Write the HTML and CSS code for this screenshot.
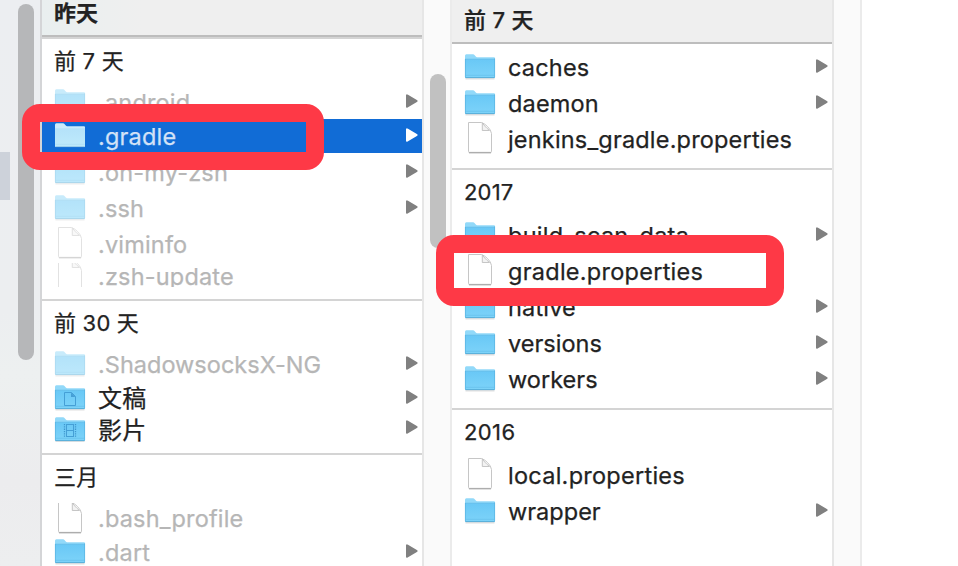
FILE: index.html
```html
<!DOCTYPE html>
<html lang="zh-CN">
<head>
<meta charset="utf-8">
<title>.gradle</title>
<link rel="stylesheet" href="styles.css">
</head>
<body>
<svg width="0" height="0" class="defs">
  <defs>
    <linearGradient id="front" x1="0" y1="0" x2="0" y2="1"><stop offset="0" stop-color="#69c8f6"/><stop offset="1" stop-color="#7dd3f9"/></linearGradient>
    <linearGradient id="front-light" x1="0" y1="0" x2="0" y2="1"><stop offset="0" stop-color="#b4e2f9"/><stop offset="1" stop-color="#bfeafb"/></linearGradient>
    <linearGradient id="fold" x1="0" y1="1" x2="1" y2="0"><stop offset="0" stop-color="#eee"/><stop offset="1" stop-color="#fff"/></linearGradient>
  </defs>
  <symbol id="folder" viewBox="0 0 32 26">
    <path d="M1.5 24.8h29" stroke="#000" stroke-opacity=".13" stroke-width="1.4"/>
    <path d="M1 1.8Q1 .2 2.4 .2H9q1 0 1.700 1L11.800 2.600q.5.6 1.300.6H30q1 0 1 1V23q0 1-1 1H2q-1 0-1-1z" fill="#92d9f9"/>
    <path d="M1 5.300H31V23q0 1-1 1H2q-1 0-1-1z" fill="url(#front)"/>
    <path d="M1 5.200H31" stroke="#5fb9e6" stroke-width=".7"/>
    <path d="M1.400 5V23M30.600 4.500V23" stroke="#57b2df" stroke-width=".7"/>
    <path d="M1.500 21.300H30.500" stroke="#62bce8" stroke-width=".6"/>
    <path d="M1.300 23.600H30.700" stroke="#55a9d4" stroke-width=".9"/>
  </symbol>
  <symbol id="folder-light" viewBox="0 0 32 26">
    <path d="M1 1.8Q1 .2 2.4 .2H9q1 0 1.700 1L11.800 2.600q.5.6 1.300.6H30q1 0 1 1V23q0 1-1 1H2q-1 0-1-1z" fill="#cbebfb"/>
    <path d="M1 5.300H31V23q0 1-1 1H2q-1 0-1-1z" fill="url(#front-light)"/>
    <path d="M1.500 21.300H30.500" stroke="#aadcf2" stroke-width=".6"/>
    <path d="M1.300 23.600H30.700" stroke="#92c6e6" stroke-width=".9"/>
  </symbol>
  <symbol id="file" viewBox="0 0 32 34">
    <path d="M5 32.500H27" stroke="#000" stroke-opacity=".12"/>
    <path d="M4.500 1.500H17.500Q20.500 2.500 23.500 5.500Q27 9 27.500 12.500V30.500q0 1-1 1h-21q-1 0-1-1z" fill="#fff" stroke="#c6c6c6"/>
    <path d="M18.300 1.800V9.500H25.500Q22.500 7 20.700 5Z" fill="url(#fold)" stroke="#c0c0c0" stroke-width=".9"/>
    <path d="M5 31.400H27" stroke="#aaa"/>
  </symbol>
  <symbol id="doc-mark" viewBox="0 0 32 26">
    <path d="M10.500 7.500H17.500L21.500 11.500V20.500H10.500z" fill="none" stroke="#459fd6"/>
    <path d="M17 7.500L21.500 12H17z" fill="#459fd6"/>
  </symbol>
  <symbol id="film-mark" viewBox="0 0 32 26">
    <path d="M10.500 7V20M21.500 7V20" stroke="#3f97cd" stroke-width="1.300" stroke-dasharray="1.300 1"/>
    <path d="M12.500 7V20M19.500 7V20M12.500 7.500H19.500M12.500 13.500H19.500M12.500 19.500H19.500" stroke="#459fd6" fill="none"/>
  </symbol>
  <symbol id="arrow" viewBox="0 0 12 14"><path d="M.9.700Q1 .2 1.600.5L11.300 6.200Q12 7 11.300 7.800L1.600 13.500Q.5 14 0 13.200V.8Q.3 0 .9.700Z"/></symbol>
</svg>
<div class="browser">
  <aside class="side"><div class="side-sel"></div><div class="thumb thumb-a"></div></aside>
  <main class="col col-a">
    <header class="head head-a">昨天</header>
    <h2 class="title t44">前 7 天</h2>
    <div class="row dim"><svg class="ic"><use href="#folder"/></svg><span class="name">.android</span><svg class="arr"><use href="#arrow"/></svg></div>
    <div class="row sel"><svg class="ic"><use href="#folder-light"/></svg><span class="name">.gradle</span><svg class="arr"><use href="#arrow"/></svg></div>
    <div class="row dim"><svg class="ic"><use href="#folder"/></svg><span class="name">.oh-my-zsh</span><svg class="arr"><use href="#arrow"/></svg></div>
    <div class="row dim"><svg class="ic"><use href="#folder"/></svg><span class="name">.ssh</span><svg class="arr"><use href="#arrow"/></svg></div>
    <div class="row dim"><svg class="ic file"><use href="#file"/></svg><span class="name">.viminfo</span></div>
    <div class="row dim cut"><svg class="ic file"><use href="#file"/></svg><span class="name">.zsh-update</span></div>
    <hr>
    <h2 class="title t44">前 30 天</h2>
    <div class="row dim"><svg class="ic"><use href="#folder"/></svg><span class="name tight">.ShadowsocksX-NG</span><svg class="arr"><use href="#arrow"/></svg></div>
    <div class="row h32"><svg class="ic"><use href="#folder"/><use href="#doc-mark"/></svg><span class="name cjk">文稿</span><svg class="arr"><use href="#arrow"/></svg></div>
    <div class="row h28"><svg class="ic"><use href="#folder"/><use href="#film-mark"/></svg><span class="name cjk">影片</span><svg class="arr"><use href="#arrow"/></svg></div>
    <hr>
    <h2 class="title t48">三月</h2>
    <div class="row faint h32 trim"><svg class="ic file"><use href="#file"/></svg><span class="name">.bash_profile</span></div>
    <div class="row faint h32"><svg class="ic"><use href="#folder"/></svg><span class="name">.dart</span><svg class="arr"><use href="#arrow"/></svg></div>
  </main>
  <div class="gutter"><div class="thumb thumb-b"></div></div>
  <section class="col col-b">
    <header class="head head-b">前 7 天</header>
    <div class="row"><svg class="ic"><use href="#folder"/></svg><span class="name">caches</span><svg class="arr"><use href="#arrow"/></svg></div>
    <div class="row"><svg class="ic"><use href="#folder"/></svg><span class="name">daemon</span><svg class="arr"><use href="#arrow"/></svg></div>
    <div class="row"><svg class="ic file"><use href="#file"/></svg><span class="name">jenkins_gradle.properties</span></div>
    <hr>
    <h2 class="title t46">2017</h2>
    <div class="row"><svg class="ic"><use href="#folder"/></svg><span class="name wide">build_scan_data</span><svg class="arr"><use href="#arrow"/></svg></div>
    <div class="row"><svg class="ic file"><use href="#file"/></svg><span class="name wide">gradle.properties</span></div>
    <div class="row"><svg class="ic"><use href="#folder"/></svg><span class="name">native</span><svg class="arr"><use href="#arrow"/></svg></div>
    <div class="row"><svg class="ic"><use href="#folder"/></svg><span class="name tight">versions</span><svg class="arr"><use href="#arrow"/></svg></div>
    <div class="row"><svg class="ic"><use href="#folder"/></svg><span class="name tight">workers</span><svg class="arr"><use href="#arrow"/></svg></div>
    <hr>
    <h2 class="title t46 year">2016</h2>
    <div class="row"><svg class="ic file"><use href="#file"/></svg><span class="name wide">local.properties</span></div>
    <div class="row"><svg class="ic"><use href="#folder"/></svg><span class="name tight">wrapper</span><svg class="arr"><use href="#arrow"/></svg></div>
  </section>
  <div class="gutter"></div>
  <div class="mark mark-a"></div>
  <div class="mark mark-b"></div>
</div>
</body>
</html>
```
FILE: styles.css
```css
* { box-sizing: border-box; }
body { margin: 0; background: #fff; overflow: hidden; }
.defs { position: absolute; }
.browser {
  position: relative; display: flex; width: 958px; height: 566px; overflow: hidden;
  font-family: Inter, "Noto Sans CJK SC", sans-serif; font-size: 23.5px; color: #222;
  -webkit-text-stroke: .25px currentColor;
}
.side {
  position: relative; flex: none; width: 42px; border-right: 2px solid #d4d5d7;
  background: linear-gradient(#eceef1, #eceef0 55%, #edf0f0 66%, #ececee 85%, #edeeef);
}
.side-sel { position: absolute; left: 0; top: 152px; width: 10px; height: 48px; background: #cdd2da; }
.thumb { position: absolute; width: 16px; border-radius: 8px; }
.thumb-a { left: 18px; top: 4px; height: 356px; background: #b6b7b9; }
.thumb-b { left: 6px; top: 74px; height: 174px; background: #c1c1c1; }
.col { flex: none; width: 380px; height: 566px; overflow: hidden; background: #fff; }
.gutter {
  position: relative; flex: none; width: 30px; background: #fafafa;
  border-left: 2px solid #e6e6e6; border-right: 2px solid #ebebeb;
}
.head { background: #efefef; font-size: 22px; }
.head-a {
  height: 39px; padding-left: 12px; line-height: 27px; font-weight: 700;
  border-bottom: 2px solid #d4d4d4; box-shadow: inset 0 -2px #bdbdbd;
  background: linear-gradient(90deg, #e9efef, #efefef 100px);
}
.head-b { height: 44px; margin-bottom: 4px; padding-left: 12px; line-height: 40px; font-weight: 500; letter-spacing: .3px; border-bottom: 2px solid #bdbdbd; }
.title { margin: 0; padding-left: 12px; font-size: 22px; font-weight: 400; line-height: 45px; letter-spacing: .2px; }
.year { letter-spacing: .4px; }
.t44 { height: 44px; }
.t46 { height: 46px; }
.t48 { height: 48px; line-height: 44px; }
hr { margin: 12px 0 0; border: 0; height: 2px; background: #d4d4d4; }
.row { display: flex; align-items: center; height: 36px; padding: 0 4px 0 12px; }
.h32 { height: 32px; }
.h28 { height: 28px; }
.ic { flex: none; width: 32px; height: 26px; margin: 2px 12px 0 0; }
.file { height: 34px; margin-top: 0; }
.name { flex: 1; white-space: nowrap; line-height: 28px; padding-top: 4px; letter-spacing: .18px; }
.tight { letter-spacing: .02px; }
.wide { letter-spacing: .26px; }
.cjk { font-size: 24px; padding-top: 3px; }
.arr { flex: none; width: 12px; height: 14px; fill: #808080; }
.dim .ic { opacity: .5; }
.dim .name, .faint .name { color: #b6b6b6; }
.sel { height: 34px; padding-bottom: 2px; background: #116cd6; }
.sel .name { color: #d3e2f7; }
.sel .arr { fill: #fff; }
.h28 .ic { margin-top: 6px; clip-path: inset(0 0 1px 0); }
.h28 .name { padding-top: 7px; }
.cut { height: 26px; align-items: flex-start; }
.cut .ic { margin-top: -3px; clip-path: inset(5px 0 5px 0); }
.cut .name { padding-top: 0; margin-top: 2px; height: 24px; overflow: hidden; }
.trim .ic { margin-top: -2px; clip-path: inset(2px 0 0 0); }
.trim .name { padding-top: 0; }
.mark { position: absolute; border: 18px solid #fe3946; border-radius: 18px; }
.mark-a { left: 22px; top: 104px; width: 302px; height: 66px; }
.mark-b { left: 436px; top: 235px; width: 348px; height: 71px; }
```
